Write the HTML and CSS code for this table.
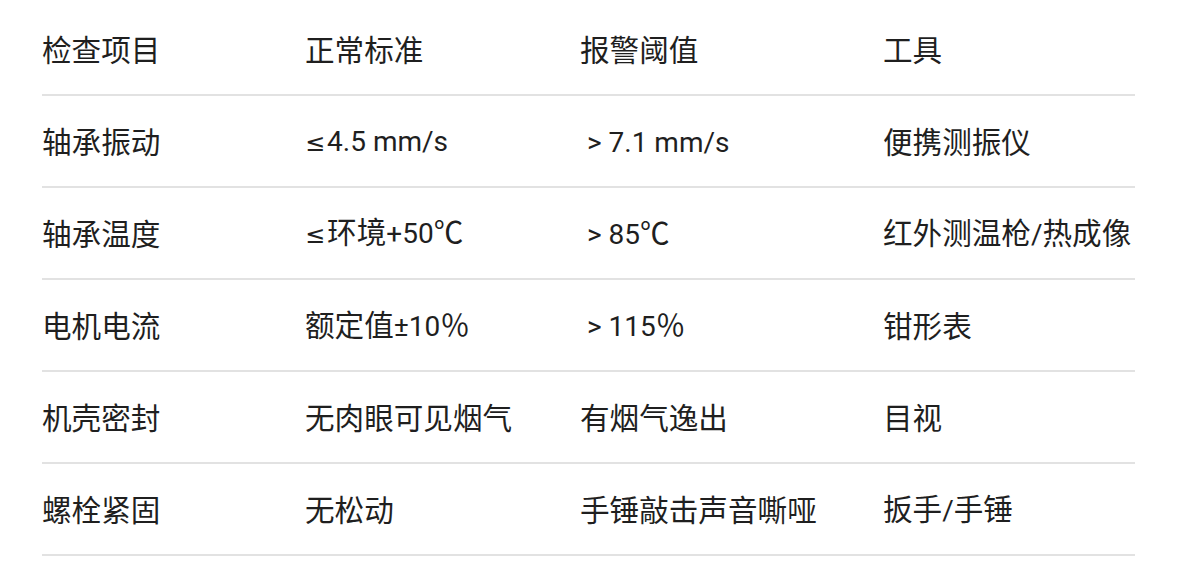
FILE: index.html
```html
<!DOCTYPE html>
<html lang="zh-CN">
<head>
<meta charset="utf-8">
<link rel="stylesheet" href="styles.css">
</head>
<body>
<div class="table">
  <div class="row">
    <div class="cell">检查项目</div><div class="cell">正常标准</div><div class="cell">报警阈值</div><div class="cell">工具</div>
  </div>
  <div class="row">
    <div class="cell">轴承振动</div><div class="cell"><span class="le">≤</span><span class="en">4.5 mm/s</span></div><div class="cell"><span class="en">&nbsp;&gt; 7.1 mm/s</span></div><div class="cell">便携测振仪</div>
  </div>
  <div class="row">
    <div class="cell">轴承温度</div><div class="cell"><span class="le">≤</span>环境<span class="en">+50</span>℃</div><div class="cell"><span class="en">&nbsp;&gt; 85</span>℃</div><div class="cell">红外测温枪<span class="en">/</span>热成像</div>
  </div>
  <div class="row">
    <div class="cell">电机电流</div><div class="cell">额定值<span class="en">±10</span>％</div><div class="cell"><span class="en">&nbsp;&gt; 115</span>％</div><div class="cell">钳形表</div>
  </div>
  <div class="row">
    <div class="cell">机壳密封</div><div class="cell">无肉眼可见烟气</div><div class="cell">有烟气逸出</div><div class="cell">目视</div>
  </div>
  <div class="row">
    <div class="cell">螺栓紧固</div><div class="cell">无松动</div><div class="cell">手锤敲击声音嘶哑</div><div class="cell">扳手<span class="en">/</span>手锤</div>
  </div>
</div>
</body>
</html>
```

FILE: styles.css
```css
html, body {
  margin: 0;
  padding: 0;
  background: #ffffff;
}
body {
  font-family: "Noto Sans CJK SC", Roboto, sans-serif;
  font-size: 29.6px;
  color: #1f1f1f;
}
.en {
  font-family: Roboto, "Noto Sans CJK SC", sans-serif;
  font-size: 28px;
}
.le {
  font-family: "DejaVu Sans", sans-serif;
  font-size: 24px;
  padding-right: 2px;
}
.table {
  margin: 4px 0 0 42px;
  width: 1093px;
}
.row {
  display: grid;
  grid-template-columns: 263px 275px 303px 252px;
  height: 90px;
  align-items: center;
  border-bottom: 2px solid #e2e2e2;
}
.cell {
  white-space: nowrap;
  line-height: 40px;
}
```
